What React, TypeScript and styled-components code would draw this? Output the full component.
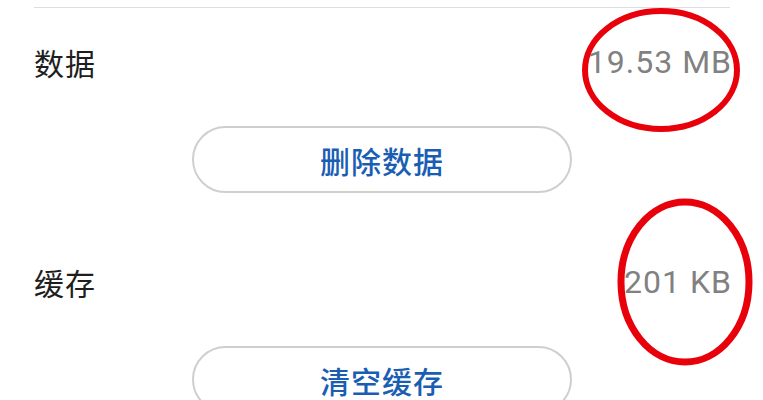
import React from "react";
import styled, { createGlobalStyle } from "styled-components";

const GlobalStyle = createGlobalStyle`
  html, body {
    margin: 0;
    padding: 0;
    background: #ffffff;
    overflow: hidden;
  }
  body {
    font-family: Roboto, "Noto Sans CJK SC", sans-serif;
  }
`;

const Page = styled.div`
  position: relative;
  width: 763px;
  height: 400px;
  overflow: hidden;
  padding: 7px 33px 0 34px;
  box-sizing: border-box;
`;

const Divider = styled.div`
  height: 1px;
  background: #dedede;
`;

const Block = styled.div`
  display: flex;
  flex-direction: column;
  align-items: center;
  padding-bottom: 35px;
`;

const Row = styled.div`
  align-self: stretch;
  display: flex;
  align-items: center;
  justify-content: space-between;
  height: 108px;
`;

const Label = styled.span`
  font-family: "Noto Sans CJK SC", sans-serif;
  font-size: 30px;
  color: #1e1e1e;
  letter-spacing: 1px;
`;

const Value = styled.span`
  font-family: Roboto, sans-serif;
  font-size: 32px;
  color: #818181;
  letter-spacing: 1px;
  margin-right: -2px;
`;

const Button = styled.div`
  margin-top: 10px;
  width: 380px;
  height: 67px;
  box-sizing: border-box;
  border: 2px solid #cfcfcf;
  border-radius: 34px;
  display: flex;
  align-items: center;
  justify-content: center;
  font-family: "Noto Sans CJK SC", sans-serif;
  font-size: 30px;
  font-weight: 500;
  letter-spacing: 1px;
  color: #1a5eb4;
`;

const Marks = styled.svg`
  position: absolute;
  left: 0;
  top: 0;
  pointer-events: none;
`;

const items = [
  { label: "数据", value: "19.53 MB", action: "删除数据" },
  { label: "缓存", value: "201 KB", action: "清空缓存" },
];

export default function App() {
  return (
    <>
      <GlobalStyle />
      <Page>
        <Divider />
        {items.map((it) => (
          <Block key={it.label}>
            <Row>
              <Label>{it.label}</Label>
              <Value>{it.value}</Value>
            </Row>
            <Button>{it.action}</Button>
          </Block>
        ))}
        <Marks width="763" height="400" viewBox="0 0 763 400">
          <ellipse cx="661" cy="70" rx="76" ry="59" fill="none" stroke="#e8000b" strokeWidth="6" />
          <ellipse cx="685" cy="282" rx="64" ry="80" fill="none" stroke="#e8000b" strokeWidth="7" />
        </Marks>
      </Page>
    </>
  );
}
